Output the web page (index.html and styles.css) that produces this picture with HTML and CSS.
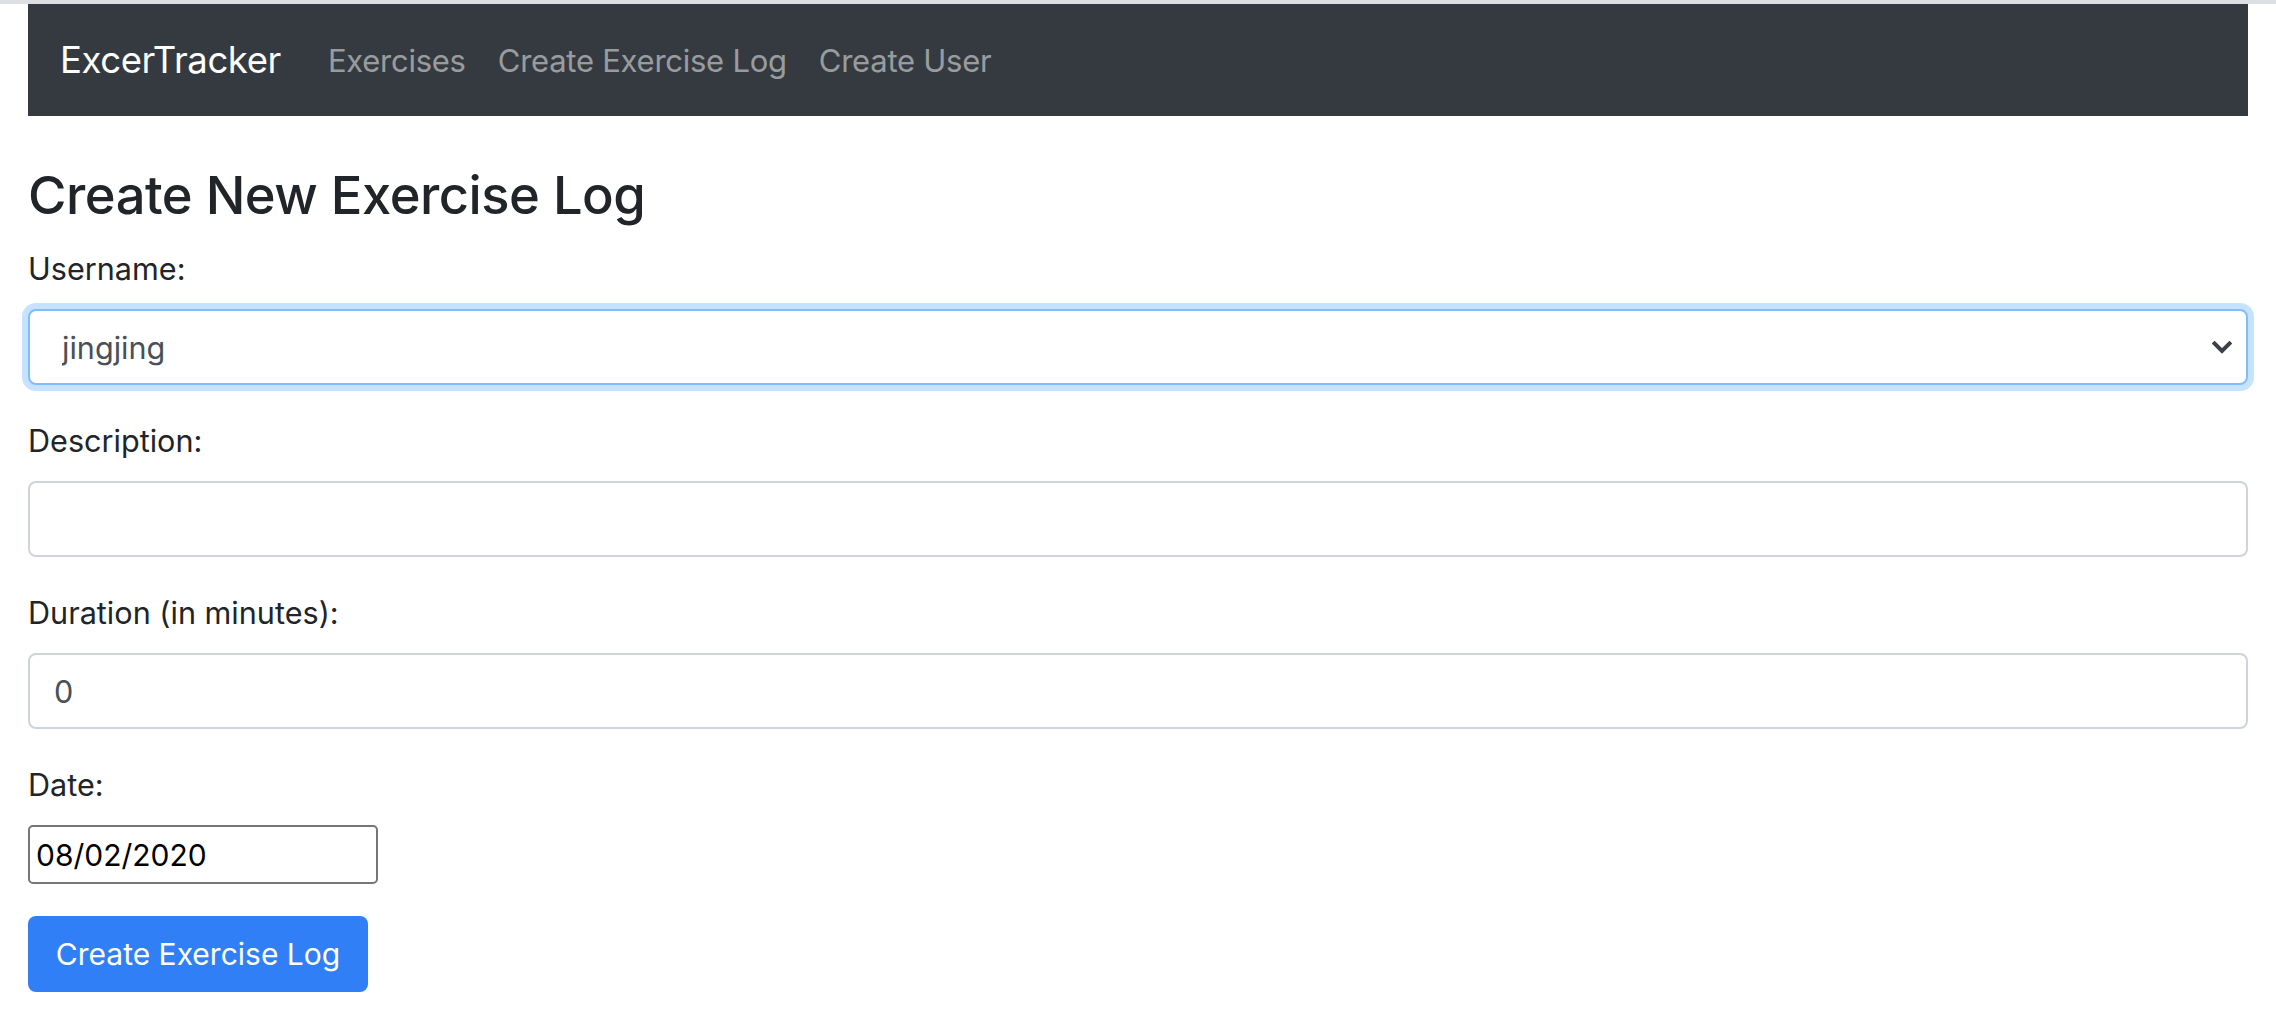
FILE: index.html
```html
<!DOCTYPE html>
<html lang="en">
<head>
<meta charset="utf-8">
<title>ExcerTracker</title>
<link rel="stylesheet" href="styles.css">
</head>
<body>
<div class="top-strip"></div>
<div class="container">
  <nav class="navbar">
    <a class="brand" href="#">ExcerTracker</a>
    <ul class="nav-links">
      <li><a class="nav-link" href="#">Exercises</a></li>
      <li><a class="nav-link" href="#">Create Exercise Log</a></li>
      <li><a class="nav-link" href="#">Create User</a></li>
    </ul>
  </nav>
  <main class="page">
    <h3 class="title">Create New Exercise Log</h3>
    <form class="form">
      <div class="form-group">
        <label class="label">Username:</label>
        <div class="select-wrap">
          <select class="control select">
            <option>jingjing</option>
          </select>
          <svg class="chevron" width="20" height="13" viewBox="0 0 20 13"><path d="M2.5 2.5 L10 10 L17.5 2.5" fill="none" stroke="#3d4147" stroke-width="4" stroke-linecap="square"/></svg>
        </div>
      </div>
      <div class="form-group">
        <label class="label">Description:</label>
        <input class="control" type="text" value="">
      </div>
      <div class="form-group">
        <label class="label">Duration (in minutes):</label>
        <input class="control" type="text" value="0">
      </div>
      <div class="form-group">
        <label class="label">Date:</label>
        <input class="date" type="text" value="08/02/2020">
      </div>
      <div class="form-group">
        <button class="btn" type="button">Create Exercise Log</button>
      </div>
    </form>
  </main>
</div>
</body>
</html>
```
FILE: styles.css
```css
* { box-sizing: border-box; }
html, body { margin: 0; padding: 0; background: #fff; }
body {
  font-family: Inter, "Noto Sans", "Liberation Sans", sans-serif;
  color: #212529;
  font-size: 30px;
}
.top-strip { height: 4px; background: #dedfe4; }
.container { padding: 0 28px; }
.navbar {
  height: 112px;
  background: #343a40;
  padding: 0 32px;
  display: flex;
  align-items: center;
}
.brand {
  color: #fff;
  text-decoration: none;
  font-size: 36.5px;
  margin-right: 31px;
  letter-spacing: -0.4px;
}
.nav-links { list-style: none; margin: 0; padding: 0; display: flex; }
.nav-link {
  display: block;
  padding: 0 16px;
  color: rgba(255,255,255,0.5);
  text-decoration: none;
  font-size: 31px;
  letter-spacing: -0.25px;
}
.title {
  margin: 46px 0 16px;
  height: 67px;
  line-height: 67px;
  font-size: 52.5px;
  font-weight: 500;
  letter-spacing: -0.5px;
}
.form { margin: 0; }
.form-group { margin-bottom: 32px; }
.label {
  display: block;
  height: 48px;
  line-height: 48px;
  margin-bottom: 16px;
  font-size: 30.6px;
}
.control {
  display: block;
  width: 100%;
  height: 76px;
  padding: 0 24px;
  font-family: inherit;
  font-size: 30.6px;
  color: #495057;
  background: #fff;
  border: 2px solid #ced4da;
  border-radius: 8px;
  outline: none;
}
.select-wrap { position: relative; }
.select {
  appearance: none;
  -webkit-appearance: none;
  border-color: #80bdff;
  box-shadow: 0 0 0 6px rgba(0,123,255,0.22);
  padding-left: 32px;
}
.chevron { position: absolute; right: 16px; top: 32px; }
.date {
  display: block;
  width: 350px;
  height: 59px;
  padding: 0 6px;
  font-family: Inter, "Liberation Sans", sans-serif;
  font-size: 30px;
  color: #000;
  border: 2px solid #767676;
  border-radius: 5px;
  outline: none;
}
.btn {
  display: block;
  width: 340px;
  height: 76px;
  padding: 0;
  background: #317ff6;
  color: #fff;
  border: none;
  border-radius: 8px;
  font-family: inherit;
  font-size: 30px;
}
```
